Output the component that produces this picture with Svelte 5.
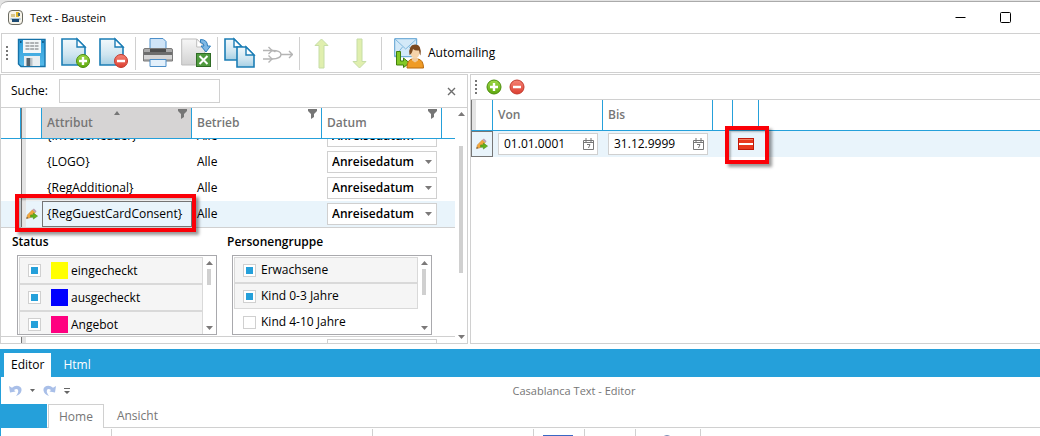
<!--
	TextBaustein — placeholder list with its validity periods on top and the
	text editor below.
-->
<script lang="ts">
	type Attribute = { name: string; company: string; selected?: boolean };
	type ListItem = { label: string; color?: string; checked: boolean };

	const attributes: Attribute[] = [
		{ name: '{InvoiceHeader}', company: 'Alle' },
		{ name: '{LOGO}', company: 'Alle' },
		{ name: '{RegAdditional}', company: 'Alle' },
		{ name: '{RegGuestCardConsent}', company: 'Alle', selected: true },
		{ name: '', company: '' }
	];

	let statusItems: ListItem[] = $state([
		{ label: 'eingecheckt', color: '#ffff00', checked: true },
		{ label: 'ausgecheckt', color: '#0000ff', checked: true },
		{ label: 'Angebot', color: '#ff0080', checked: true }
	]);

	let personItems: ListItem[] = $state([
		{ label: 'Erwachsene', checked: true },
		{ label: 'Kind 0-3 Jahre', checked: true },
		{ label: 'Kind 4-10 Jahre', checked: false }
	]);

	let search = $state('');
	let from = $state('01.01.0001');
	let to = $state('31.12.9999');
	let viewport: HTMLDivElement | undefined = $state();

	$effect(() => {
		if (viewport) viewport.scrollTop = 16;
	});
</script>

{#snippet page(x: number, y: number, w: number, h: number)}
	<path d="M{x} {y}h{w - 8}l8 8v{h - 8}h-{w}z" fill="url(#paper)" stroke="#1b7db5" stroke-width="1.6" />
	<path d="M{x + w - 8} {y}v8h8z" fill="#fff" stroke="#1b7db5" stroke-width="1.4" />
{/snippet}

{#snippet plus(cx: number, cy: number, r: number)}
	<circle {cx} {cy} {r} fill="url(#green)" stroke="#4b8c0c" />
	<path d="M{cx - 4} {cy}h8M{cx} {cy - 4}v8" stroke="#fff" stroke-width="2.4" />
{/snippet}

{#snippet minus(cx: number, cy: number, r: number)}
	<circle {cx} {cy} {r} fill="url(#red)" stroke="#c23a2e" />
	<path d="M{cx - 4} {cy}h8" stroke="#fff" stroke-width="2.6" />
{/snippet}

{#snippet pencil()}
	<svg class="pencil" aria-hidden="true" width="12" height="12" viewBox="0 0 13 13">
		<path d="M.5 11.500l1-4L7 2l3 3-5.500 5.500z" fill="#f3a73b" stroke="#c98a3c" stroke-width=".6" />
		<path d="M7 2l1.500-1.500 3 3L10 5z" fill="#b9a1b5" />
		<path d="M.5 11.500l.5-2 1.500 1.500z" fill="#555" />
		<path d="M5 7.500h3V5.500l4.500 3.300L8 12V10H5z" fill="#65b31c" stroke="#3f8a10" stroke-width=".6" />
	</svg>
{/snippet}

{#snippet scrollbar(kind: string)}
	<div class="scrollbar {kind}" aria-hidden="true">
		<svg width="7" height="4" viewBox="0 0 7 4"><path d="M0 4l3.500-4L7 4z" fill="#7b7979" /></svg>
		<span class="thumb"></span>
		<svg class="down" width="7" height="4" viewBox="0 0 7 4"><path d="M0 0h7L3.500 4z" fill="#7b7979" /></svg>
	</div>
{/snippet}

{#snippet funnel()}
	<svg class="funnel" aria-hidden="true" width="9" height="10" viewBox="0 0 9 10">
		<path d="M0 0h9v2L6 5v3l-3 2V5L0 2z" fill="#767676" />
	</svg>
{/snippet}

{#snippet dateField(label: string, get: () => string, set: (v: string) => void)}
	<div class="date">
		<input type="text" aria-label={label} bind:value={get, set} />
		<button type="button" aria-label="Kalender {label}">
			<svg width="11" height="13" viewBox="0 0 11 13" fill="none" stroke="#777">
				<path d="M.5 2.500h10v9H.5zM.5 4.500h10M3 0v4M8 0v4" />
				<path d="M4 6.500h3l-1.500 3.500" />
			</svg>
		</button>
	</div>
{/snippet}

{#snippet checkList(title: string, items: ListItem[], kind: string)}
	<section class="picklist {kind}">
		<h2>{title}</h2>
		<div class="box">
			<ul>
				{#each items as item (item.label)}
					<li class:on={item.checked}>
						<label>
							<input type="checkbox" bind:checked={item.checked} />
							{#if item.color}
								<span class="swatch" style:background={item.color}></span>
							{/if}
							{item.label}
						</label>
					</li>
				{/each}
			</ul>
			{@render scrollbar('list')}
		</div>
	</section>
{/snippet}

<svg class="defs" aria-hidden="true" width="0" height="0">
	<linearGradient id="paper" x1="0" y1="0" x2="0" y2="1">
		<stop offset="0" stop-color="#f2f9fc" />
		<stop offset=".6" stop-color="#cfe5f0" />
		<stop offset="1" stop-color="#a6cfe3" />
	</linearGradient>
	<linearGradient id="grey" x1="0" y1="0" x2="0" y2="1">
		<stop offset="0" stop-color="#f6f6f6" />
		<stop offset="1" stop-color="#d2d2d2" />
	</linearGradient>
	<linearGradient id="green" x1="0" y1="0" x2="0" y2="1">
		<stop offset="0" stop-color="#a0d94a" />
		<stop offset="1" stop-color="#5da80c" />
	</linearGradient>
	<linearGradient id="red" x1="0" y1="0" x2="0" y2="1">
		<stop offset="0" stop-color="#f58476" />
		<stop offset="1" stop-color="#dc3e30" />
	</linearGradient>
	<linearGradient id="floppy" x1="0" y1="0" x2="0" y2="1">
		<stop offset="0" stop-color="#2c9cd8" />
		<stop offset="1" stop-color="#56baea" />
	</linearGradient>
</svg>

<div class="window">
	<header class="titlebar">
		<svg aria-hidden="true" width="15" height="15" viewBox="0 0 15 15">
			<rect x=".5" y=".5" width="14" height="14" rx="3.500" fill="#f7f4ea" stroke="#6b6b62" />
			<path d="M3 4h4v3H3z" fill="#d9c78c" />
			<path d="M8 2h3v5H8z" fill="#e0b72c" />
			<path d="M2.500 8h10v2h-10z" fill="#a9c4d6" />
			<path d="M4 9h7v3H4z" fill="#1d4a73" />
			<path d="M10 3h2v3h-2z" fill="#4a6b7a" />
		</svg>
		<h1>Text - Baustein</h1>
		<button class="caption" type="button" aria-label="Minimieren">
			<svg width="11" height="11" viewBox="0 0 11 11"><path d="M.5 5.500h10" stroke="#000" /></svg>
		</button>
		<button class="caption" type="button" aria-label="Maximieren">
			<svg width="11" height="11" viewBox="0 0 11 11">
				<rect x=".5" y=".5" width="10" height="10" rx="1" fill="none" stroke="#000" />
			</svg>
		</button>
	</header>

	<div class="toolbar" role="toolbar" aria-label="Baustein">
		<span class="grip"></span>
		<button type="button" aria-label="Speichern">
			<svg width="30" height="32" viewBox="0 0 30 32">
				<path d="M1.500 2.500h26.500v27H4l-2.500-2.500z" fill="url(#floppy)" stroke="#1672a8" stroke-width="1.400" />
				<rect x="6" y="3" width="18" height="13" fill="#f2f6f8" />
				<path d="M8.500 6h13M8.500 9h13M8.500 12h13" stroke="#6a6f73" stroke-dasharray="4 .7" />
				<rect x="3" y="4" width="1.500" height="2" fill="#0e5480" />
				<rect x="25.200" y="4" width="1.500" height="2" fill="#0e5480" />
				<path d="M7 19h16v10H7z" fill="#e8eef1" />
				<path d="M9.500 21h4v8h-4z" fill="#57636b" />
				<path d="M13.500 21h2v8h-2z" fill="#b9c2c7" />
			</svg>
		</button>
		<span class="sep"></span>
		<button type="button" aria-label="Neu">
			<svg width="30" height="32" viewBox="0 0 30 32">
				{@render page(1, 2, 23, 26)}
				{@render plus(22, 24, 6.5)}
			</svg>
		</button>
		<button type="button" aria-label="Löschen">
			<svg width="30" height="32" viewBox="0 0 30 32">
				{@render page(1, 2, 23, 26)}
				{@render minus(22, 24, 6.5)}
			</svg>
		</button>
		<span class="sep"></span>
		<button type="button" aria-label="Drucken">
			<svg width="30" height="32" viewBox="0 0 30 32">
				<path d="M7 1.500h13l3 3V14H7z" fill="#cfe4f7" stroke="#4c8fc9" />
				<path d="M2 11.500h26q1.500 0 1.500 1.500v11h-29V13q0-1.500 1.500-1.500z" fill="#a9a9a9" stroke="#7b7b7b" />
				<path d="M7 12h16v3H7z" fill="#4d4d4d" />
				<path d="M1 15h28v3H1z" fill="#6d6d6d" />
				<path d="M1 18h28v4H1z" fill="#d5d5d5" />
				<path d="M7 22.500h16v7H7z" fill="#e3f0fb" stroke="#4c8fc9" />
			</svg>
		</button>
		<button type="button" aria-label="Excel-Export">
			<svg width="30" height="32" viewBox="0 0 30 32">
				<path d="M.7 2h15l8 8v18H.7z" fill="url(#grey)" stroke="#bdbdbd" />
				<path d="M15.700 2v8h8z" fill="#fff" stroke="#bdbdbd" />
				<path d="M19.500 2.500q7 0 7 6.500h3L25 15l-5-6h3q0-3-3.500-3.500z" fill="#7fb8e4" stroke="#2f7fbd" />
				<rect x="15.500" y="16.500" width="14" height="13" fill="#4f9a3e" stroke="#2f6b25" />
				<path d="M18.500 19l8 8m0-8l-8 8" stroke="#fff" stroke-width="2" />
			</svg>
		</button>
		<span class="sep"></span>
		<button type="button" aria-label="Kopieren">
			<svg width="32" height="32" viewBox="0 0 32 32">
				{@render page(1, 2, 17, 21)}
				{@render page(13, 10, 17, 20)}
			</svg>
		</button>
		<button type="button" aria-label="Zusammenführen">
			<svg width="30" height="32" viewBox="0 0 30 32" fill="none" stroke="#b4b4b4" stroke-width="1.400">
				<path d="M0 13.500h9q2 0 3.500 1.500M0 22h9M18 17.500h11M26 14l3.500 3.500L26 21" />
				<path d="M5.500 10l3.500 3.500L5.500 17M5.500 18.500L9 22l-3.500 3.500" />
				<path d="M9 13.500q9 0 9 4t-9 4.500" />
			</svg>
		</button>
		<span class="sep"></span>
		<button type="button" aria-label="Nach oben">
			<svg width="30" height="32" viewBox="0 0 30 32">
				<path d="M14.500 2L21 8.500h-4V31h-5V8.500H8z" fill="#e0efae" stroke="#c6dda6" />
			</svg>
		</button>
		<button type="button" aria-label="Nach unten">
			<svg width="30" height="32" viewBox="0 0 30 32">
				<path d="M14.500 31L8 24.500h4V2h5v22.500h4z" fill="#e0efae" stroke="#c6dda6" />
			</svg>
		</button>
		<span class="sep"></span>
		<button class="wide" type="button">
			<svg aria-hidden="true" width="30" height="32" viewBox="0 0 30 32">
				<path d="M.7 1.700h22v18H.7z" fill="#d3e9f8" stroke="#5b9fd0" />
				<path d="M1 2l10.700 10L22.500 2M1 19.500l7.500-9.500M22.500 19.500L15 9.500" fill="none" stroke="#80b8de" />
				<path d="M2.500 14.500h4V24h3v-3l6 5-6 4.500V28h-7z" fill="#83c827" stroke="#417f0c" />
				<path d="M13 31q0-8 5-9h6q5.500 1 5.500 9z" fill="#ef9b26" stroke="#b8690c" />
				<path d="M18 21h6v2.500l-3 2-3-2z" fill="#f0c99a" />
				<ellipse cx="21" cy="15.500" rx="4.500" ry="6" fill="#f6d3aa" />
				<path d="M15.500 18q-1.500-10 5.500-10.500Q28 7 26.500 18.500q-1-1-1.500-5-4 .5-6-1.500-1 5-3.500 6z" fill="#7c4a20" />
			</svg>
			Automailing
		</button>
	</div>

	<main class="panes">
		<section class="pane attributes">
			<form class="search">
				<label for="search">Suche:</label>
				<input id="search" type="text" bind:value={search} />
				<button type="button" aria-label="Suche schließen">
					<svg width="9" height="9" viewBox="0 0 9 9"><path d="M1 1l7 7m0-7L1 8" stroke="#6d6d6d" stroke-width="1.400" /></svg>
				</button>
			</form>
			<div class="gridwrap">
				<div class="viewport" bind:this={viewport}>
					<table>
						<colgroup>
							<col class="c-indent" />
							<col class="c-mark" />
							<col class="c-name" />
							<col class="c-company" />
							<col class="c-date" />
							<col />
						</colgroup>
						<thead>
							<tr>
								<th></th>
								<th class="mark"></th>
								<th class="sorted">
									Attribut
									<svg class="sort" aria-hidden="true" width="6" height="4" viewBox="0 0 6 4">
										<path d="M0 4l3-4 3 4z" fill="#767676" />
									</svg>
									{@render funnel()}
								</th>
								<th>Betrieb {@render funnel()}</th>
								<th>Datum {@render funnel()}</th>
								<th class="rest"></th>
							</tr>
						</thead>
						<tbody>
							{#each attributes as row (row.name)}
								<tr class:selected={row.selected}>
									<td></td>
									<td class="mark">
										{#if row.selected}{@render pencil()}{/if}
									</td>
									<td class="name">
										{row.name}
										{#if row.selected}<span class="highlight row-highlight"></span>{/if}
									</td>
									<td>{row.company}</td>
									<td>
										<span class="combo">
											<select aria-label="Datum {row.name}">
												<option>Anreisedatum</option>
												<option>Abreisedatum</option>
											</select>
											<svg aria-hidden="true" width="7" height="4" viewBox="0 0 7 4"><path d="M0 0h7L3.500 4z" fill="#7b7979" /></svg>
										</span>
									</td>
									<td></td>
								</tr>
								{#if row.selected}
									<tr class="details">
										<td colspan="6">
											<div class="lists">
												{@render checkList('Status', statusItems, 'status')}
												{@render checkList('Personengruppe', personItems, 'persons')}
											</div>
										</td>
									</tr>
								{/if}
							{/each}
						</tbody>
					</table>
				</div>
				{@render scrollbar('grid')}
			</div>
		</section>

		<section class="pane periods">
			<div class="minibar" role="toolbar" aria-label="Zeiträume">
				<span class="grip"></span>
				<button type="button" aria-label="Zeitraum hinzufügen">
					<svg width="16" height="16" viewBox="0 0 16 16">{@render plus(8, 8, 7)}</svg>
				</button>
				<button type="button" aria-label="Zeitraum entfernen">
					<svg width="16" height="16" viewBox="0 0 16 16">{@render minus(8, 8, 7)}</svg>
				</button>
			</div>
			<table>
				<colgroup>
					<col class="p-mark" />
					<col class="p-date" />
					<col class="p-date" />
					<col class="p-gap" />
					<col class="p-delete" />
					<col />
				</colgroup>
				<thead>
					<tr>
						<th class="mark"></th>
						<th>Von</th>
						<th>Bis</th>
						<th></th>
						<th></th>
						<th class="rest"></th>
					</tr>
				</thead>
				<tbody>
					<tr class="selected">
						<td class="mark current">{@render pencil()}</td>
						<td>{@render dateField('Von', () => from, (v) => (from = v))}</td>
						<td>{@render dateField('Bis', () => to, (v) => (to = v))}</td>
						<td></td>
						<td class="delete">
							<button type="button" aria-label="Zeile löschen">
								<svg width="16" height="12" viewBox="0 0 16 12">
									<rect x=".5" y=".5" width="15" height="11" fill="#e8381e" stroke="#c01808" />
									<path d="M1 5h14v2H1z" fill="#fff" />
									<path d="M1 1.500h14" stroke="#f58268" />
								</svg>
							</button>
							<span class="highlight cell-highlight"></span>
						</td>
						<td></td>
					</tr>
				</tbody>
			</table>
		</section>
	</main>

	<section class="editor">
		<nav class="tabs">
			<button class="active" type="button">Editor</button>
			<button type="button">Html</button>
		</nav>
		<div class="quick">
			<div class="tools">
				<button type="button" aria-label="Rückgängig">
					<svg width="13" height="13" viewBox="0 0 13 13">
						<path d="M0 2l1 6.500 5.500-1L5 6q3-2 4 0t-2 6q5-2 5.500-5.500T9.500 2 3 3.800z" fill="#a9bfe8" />
					</svg>
				</button>
				<svg class="tick" aria-hidden="true" width="5" height="3" viewBox="0 0 5 3"><path d="M0 0h5L2.500 3z" fill="#666" /></svg>
				<button type="button" aria-label="Wiederholen">
					<svg width="13" height="13" viewBox="0 0 13 13">
						<path d="M13 2l-1 6.500-5.500-1L8 6Q5 4 4 6t2 6Q1 10 .5 6.500T3.500 2 10 3.800z" fill="#a9bfe8" />
					</svg>
				</button>
				<button type="button" aria-label="Symbolleiste anpassen">
					<svg width="6" height="6" viewBox="0 0 6 6"><path d="M0 0h6v1H0zM0 3h6L3 6z" fill="#666" /></svg>
				</button>
			</div>
			<p>Casablanca Text - Editor</p>
		</div>
		<nav class="ribbon-tabs">
			<button class="file" type="button" aria-label="Datei"></button>
			<button class="active" type="button">Home</button>
			<button type="button">Ansicht</button>
		</nav>
		<div class="ribbon">
			<span class="g1"></span>
			<span class="g2"></span>
			<span class="g3"></span>
			<span class="g4"><svg aria-hidden="true" width="30" height="10" viewBox="0 0 30 10"><path d="M0 0h30v10H0z" fill="#3a68c4" /></svg></span>
			<span class="g4"></span>
			<span class="g5"><svg aria-hidden="true" width="14" height="14" viewBox="0 0 14 14"><circle cx="7" cy="7" r="6" fill="#e6ebf5" stroke="#506a9c" stroke-width="1.500" /></svg></span>
			<span class="g6"></span>
		</div>
	</section>
</div>

<style>
	:global(body) {
		margin: 0;
		background: #e4e4e4;
		overflow: hidden;
	}

	.window {
		--line: #d0d0d0;
		--blue: #25a0da;
		--row: #e9f4fb;
		margin-top: 1px;
		border-top: 1px solid #aaa;
		border-radius: 8px 0 0 0;
		background: #fff;
		font: 12px/16px 'Open Sans', 'Noto Sans', sans-serif;
		color: #000;
		overflow: hidden;
		height: calc(100vh - 2px);
	}

	.defs {
		position: absolute;
	}

	button,
	input,
	select {
		box-sizing: border-box;
		margin: 0;
		padding: 0;
		border: none;
		background: none;
		font: inherit;
		color: inherit;
	}

	svg {
		display: block;
		flex: none;
	}

	.titlebar {
		display: flex;
		align-items: center;
		height: 31px;
		padding-left: 8px;
	}

	h1 {
		flex: 1;
		margin: 0 0 0 7px;
		font-size: 11px;
		font-weight: 400;
	}

	.caption {
		display: grid;
		place-items: center;
		width: 45px;
		height: 28px;
	}

	.caption:last-child {
		margin-right: 12px;
	}

	.toolbar {
		display: flex;
		align-items: center;
		height: 38px;
		margin-left: 1px;
		border: 1px solid var(--line);
		border-right: none;
	}

	.grip {
		flex: none;
		width: 2px;
		height: 14px;
		margin: 0 5px 0 4px;
		background: repeating-linear-gradient(#777 0 2px, transparent 2px 4px);
	}

	.toolbar button {
		display: flex;
		align-items: center;
		justify-content: center;
		width: 38px;
		height: 36px;
	}

	.toolbar .wide {
		gap: 4px;
		width: auto;
		padding: 0 9px;
	}

	.sep {
		width: 1px;
		height: 33px;
		margin: 0 3px 0 2px;
		background: var(--line);
	}

	.panes {
		display: flex;
		gap: 2px;
		height: 270px;
		padding: 1px 0 5px;
	}

	.pane {
		box-sizing: border-box;
		border: 1px solid var(--line);
	}

	.attributes {
		display: flex;
		flex-direction: column;
		flex: 0 0 45%;
		min-width: 0;
	}

	.search {
		display: flex;
		align-items: center;
		height: 32px;
		border-bottom: 1px solid var(--line);
		padding: 0 11px 0 10px;
	}

	.search input {
		width: 161px;
		height: 24px;
		margin-left: 11px;
		border: 1px solid var(--line);
		padding: 0 6px;
	}

	.search button {
		margin-left: auto;
	}

	.gridwrap {
		display: flex;
		flex: 1;
		min-height: 0;
	}

	.viewport {
		flex: 1;
		overflow: hidden;
	}

	table {
		width: 100%;
		table-layout: fixed;
		border-spacing: 0;
	}

	.c-indent { width: 20px; }
	.c-mark { width: 21px; }
	.c-name { width: 150px; }
	.c-company { width: 130px; }
	.c-date { width: 120px; }
	.p-mark { width: 22px; }
	.p-date { width: 110px; }
	.p-gap { width: 20px; }
	.p-delete { width: 26px; }

	th {
		position: relative;
		box-sizing: border-box;
		height: 31px;
		padding: 0 0 0 5px;
		border-right: 1px solid var(--blue);
		border-bottom: 1px solid var(--blue);
		background: #fff;
		font-weight: 600;
		text-align: left;
		color: #767676;
	}

	.viewport th {
		position: sticky;
		top: 0;
		z-index: 3;
	}

	th.rest {
		border-right: none;
	}

	th.sorted {
		background: #d6d4d4;
	}

	.mark {
		border-left: 1px solid #767676;
		background: linear-gradient(90deg, #e4e4e4 4px, transparent 4px);
	}

	th.mark {
		background: linear-gradient(90deg, #e4e4e4 4px, #fff 4px);
	}

	.sort {
		position: absolute;
		top: 3px;
		left: 72px;
	}

	.funnel {
		position: absolute;
		top: 1px;
		right: 4px;
	}

	td {
		position: relative;
		box-sizing: border-box;
		height: 26px;
		padding: 0 0 0 5px;
	}

	td.mark {
		padding-left: 4px;
	}

	tr.selected td {
		background-color: var(--row);
	}

	.viewport tr.selected .name {
		box-shadow: inset 0 0 0 1px #767676;
	}

	td.current {
		border: 1px solid #767676;
		background-image: none;
	}

	.highlight {
		position: absolute;
		z-index: 2;
		box-sizing: border-box;
		border: 4px solid #fb0007;
		box-shadow: 3px 3px 3px rgba(0, 0, 0, 0.4), inset 2px 2px 2px rgba(0, 0, 0, 0.25);
		pointer-events: none;
	}

	.row-highlight {
		inset: -7px -4px -5px -27px;
	}

	.cell-highlight {
		inset: -5px -10px -7px -8px;
	}

	.combo {
		display: flex;
		align-items: center;
		width: 110px;
	}

	.combo select {
		appearance: none;
		width: 110px;
		height: 22px;
		border: 1px solid var(--line);
		background: #fff;
		padding-left: 4px;
		font-weight: 600;
	}

	.combo svg {
		margin-left: -12px;
		pointer-events: none;
	}

	.details td {
		height: 110px;
		padding: 0;
		border-top: 1px solid var(--line);
		border-bottom: 1px solid var(--line);
		vertical-align: top;
	}

	.lists {
		display: flex;
		gap: 10px;
		padding: 6px 0 0 11px;
	}

	.picklist {
		width: 205px;
	}

	h2 {
		margin: 0 0 5px;
		font-size: 12px;
		font-weight: 600;
	}

	.box {
		display: flex;
		box-sizing: border-box;
		height: 80px;
		margin-left: 5px;
		border: 1px solid #a9a9ad;
		padding: 1px 1px 0;
		overflow: hidden;
	}

	ul {
		flex: 1;
		margin: 0;
		padding: 0;
		list-style: none;
	}

	li {
		box-sizing: border-box;
		height: 26px;
		border: 1px solid transparent;
	}

	.status li {
		height: 27px;
	}

	li.on {
		border-color: #d9d9d9;
		background: #f5f5f5;
	}

	li label {
		display: flex;
		align-items: center;
		height: 100%;
		padding-left: 8px;
	}

	.persons label {
		gap: 5px;
	}

	li input {
		appearance: none;
		width: 13px;
		height: 13px;
		border: 1px solid var(--line);
		background: #fff;
	}

	li input:checked {
		padding: 2px;
		background: var(--blue) content-box;
		box-shadow: inset 0 0 0 2px #fff;
	}

	.swatch {
		width: 17px;
		height: 17px;
		margin: 0 3px 0 10px;
	}

	.scrollbar {
		display: flex;
		flex-direction: column;
		align-items: center;
		flex: none;
		width: 12px;
		padding: 4px 0;
	}

	.scrollbar .down {
		margin-top: auto;
	}

	.thumb {
		width: 4px;
		background: #d0d0d0;
	}

	.grid .thumb {
		flex: 0 0 56%;
		margin-top: 30px;
	}

	.list .thumb {
		flex: 0 0 16px;
		margin-top: 4px;
	}

	.persons .thumb {
		flex-basis: 26px;
	}

	.periods {
		flex: 1;
		border-right: none;
	}

	.minibar {
		display: flex;
		align-items: center;
		gap: 7px;
		height: 24px;
		border-bottom: 1px solid var(--line);
	}

	.minibar .grip {
		margin-right: 2px;
	}

	.date {
		display: flex;
		align-items: center;
		box-sizing: border-box;
		width: 100px;
		height: 22px;
		border: 1px solid var(--line);
		background: #fff;
		padding: 0 3px 0 5px;
	}

	.date input {
		flex: 1;
		min-width: 0;
	}

	td.delete button {
		display: block;
	}

	.tabs {
		display: flex;
		align-items: flex-end;
		height: 28px;
		padding-left: 4px;
		background: var(--blue);
	}

	.tabs button {
		height: 24px;
		padding: 0 12px;
		color: #fff;
	}

	.tabs .active {
		padding: 0 7px;
		background: #fff;
		color: #000;
	}

	.quick {
		display: grid;
		grid-template-columns: auto 1fr;
		column-gap: 38px;
		align-items: center;
		height: 27px;
		border-left: 1px solid var(--blue);
		padding-left: 8px;
		color: #767676;
	}

	.quick p {
		margin: 0;
		font-size: 11px;
		text-align: center;
	}

	.tools {
		display: flex;
		align-items: center;
		gap: 8px;
	}

	.ribbon-tabs {
		display: flex;
		height: 24px;
		box-shadow: inset 0 -1px var(--line);
		color: #767676;
	}

	.ribbon-tabs button {
		padding: 0 13px;
	}

	.ribbon-tabs .file {
		width: 47px;
		background: var(--blue);
	}

	.ribbon-tabs .active {
		margin-left: 1px;
		border: 1px solid var(--line);
		border-bottom: none;
		background: #fff;
		padding: 0 10px;
	}

	.ribbon {
		display: flex;
		height: 90px;
		border-left: 1px solid var(--blue);
	}

	.ribbon span {
		box-sizing: border-box;
		margin-top: 1px;
		border-right: 1px solid var(--line);
		padding: 6px 9px;
	}

	.g1 { width: 111px; }
	.g2 { width: 261px; }
	.g3 { width: 161px; }
	.g4 { width: 51px; }
	.g5 { width: 65px; }

	.ribbon .g5 {
		padding-left: 24px;
	}

	.ribbon .g6 {
		flex: 1;
		border-right: none;
	}
</style>
